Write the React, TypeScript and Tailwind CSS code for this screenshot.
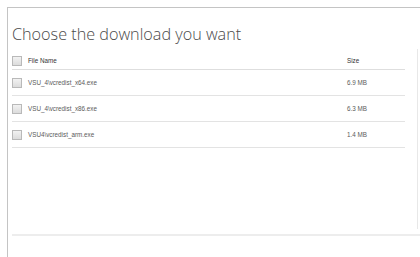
import React from "react";

const files = [
  { name: "VSU_4\\vcredist_x64.exe", size: "6.9 MB" },
  { name: "VSU_4\\vcredist_x86.exe", size: "6.3 MB" },
  { name: "VSU4\\vcredist_arm.exe", size: "1.4 MB" },
];

const Checkbox: React.FC = () => (
  <span className="block w-[10px] h-[10px] border border-[#b9b9b9] bg-gradient-to-b from-[#f2f2f2] to-[#dcdcdc]" />
);

export default function App() {
  return (
    <div className="w-[420px] h-[257px] bg-white overflow-hidden" style={{ fontFamily: '"Liberation Sans", Arial, sans-serif' }}>
      <div className="mt-[7px] ml-[7px] h-[250px] border-t border-l border-[#c4c4c4] pl-[4px]">
        {/* HEADER */}
        <h1
          className="mt-[14px] h-[25px] text-[16.2px] leading-[24px] font-light text-[#4a4a4a]"
          style={{ fontFamily: '"Open Sans", "Noto Sans", sans-serif' }}
        >
          Choose the download you want
        </h1>

        {/* TABLE */}
        <div className="mt-[2px] w-[406px] h-[180px] border-r border-[#e8e8e8] pr-[12px] text-[6.3px] text-[#5a5a5a]">
          <div className="flex items-center h-[21px] border-b border-[#dedede] pt-[3px]">
            <div className="w-[16px]">
              <Checkbox />
            </div>
            <div className="flex-1 text-[#333]">File Name</div>
            <div className="w-[58px] text-[#333]">Size</div>
          </div>
          {files.map((f) => (
            <div key={f.name} className="flex items-center h-[26px] border-b border-[#e3e3e3]">
              <div className="w-[16px]">
                <Checkbox />
              </div>
              <div className="flex-1">{f.name}</div>
              <div className="w-[58px]">{f.size}</div>
            </div>
          ))}
        </div>

        {/* FOOTER LINE */}
        <div className="mt-[5px] h-[2px] bg-[#ededed]" />
      </div>
    </div>
  );
}
